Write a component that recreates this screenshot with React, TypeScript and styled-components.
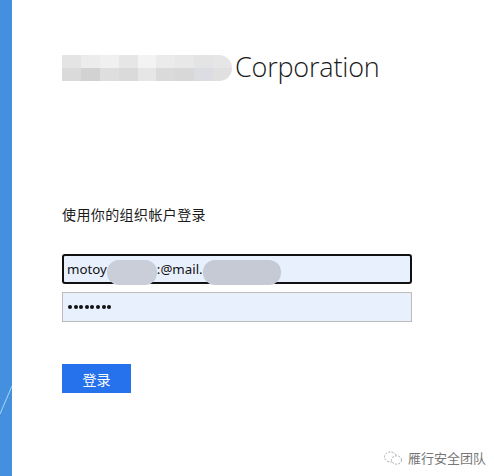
import React from "react";
import styled, { createGlobalStyle } from "styled-components";

const Global = createGlobalStyle`
  html, body { margin: 0; padding: 0; background: #fff; }
  body { font-family: "Segoe UI", "Open Sans", "Noto Sans CJK SC", sans-serif; }
`;

const Page = styled.div`
  display: flex;
  width: 494px;
  height: 476px;
  overflow: hidden;
  position: relative;
`;

const Stripe = styled.div`
  width: 12px;
  flex: none;
  background: #4590de;
  position: relative;
`;

const StripeLine = styled.svg`
  position: absolute;
  left: 0;
  top: 380px;
`;

const Main = styled.main`
  flex: 1;
  padding: 50px 0 0 50px;
  display: flex;
  flex-direction: column;
`;

const Brand = styled.div`
  display: flex;
  align-items: center;
  gap: 3px;
  height: 32px;
`;

const Blur = styled.div`
  display: flex;
  width: 170px;
  height: 26px;
  flex-direction: column;
  border-radius: 0 14px 14px 0;
  overflow: hidden;
  margin-top: 3px;
`;

const BlurRow = styled.div`
  display: flex;
  flex: 1;
`;

const BlurCell = styled.div<{ $c: string }>`
  flex: 1;
  background: ${(p) => p.$c};
`;

const Corp = styled.span`
  font-family: "Open Sans", sans-serif;
  font-weight: 300;
  font-size: 27px;
  color: #1a1a1a;
  letter-spacing: -0.2px;
`;

const Prompt = styled.div`
  margin-top: 122px;
  font-family: "Noto Sans CJK SC", sans-serif;
  font-size: 14px;
  color: #1a1a1a;
  letter-spacing: 0.4px;
  line-height: 20px;
`;

const Field = styled.div<{ $focused?: boolean }>`
  box-sizing: border-box;
  width: 350px;
  height: 30px;
  background: #e8f0fe;
  border: ${(p) => (p.$focused ? "2px solid #111" : "1px solid #bcbcbc")};
  border-radius: ${(p) => (p.$focused ? "3px" : "0")};
  display: flex;
  align-items: center;
  padding-left: ${(p) => (p.$focused ? "3px" : "4px")};
  font-family: "Noto Sans", "Open Sans", sans-serif;
  font-size: 13.3px;
  color: #111;
`;

const Fields = styled.div`
  margin-top: 30px;
  display: flex;
  flex-direction: column;
  gap: 8px;
`;

const Masked = styled.span<{ $w: number; $c: string }>`
  display: inline-block;
  width: ${(p) => p.$w}px;
  height: 25px;
  border-radius: 12px;
  background: ${(p) => p.$c};
  margin-top: 6px;
`;

const Dots = styled.span`
  display: flex;
  gap: 1.6px;
  padding-left: 1px;
`;

const Dot = styled.span`
  width: 4px;
  height: 4px;
  border-radius: 50%;
  background: #111;
`;

const Button = styled.button`
  margin-top: 42px;
  width: 69px;
  height: 29px;
  border: none;
  background: #2672ec;
  color: #fff;
  font-family: "Noto Sans CJK SC", sans-serif;
  font-size: 14px;
  padding: 0;
  cursor: pointer;
`;

const Watermark = styled.div`
  position: absolute;
  right: 8px;
  bottom: 9px;
  display: flex;
  align-items: center;
  gap: 5px;
  font-family: "Noto Sans CJK SC", sans-serif;
  font-size: 13px;
  color: #777;
`;

const cells1 = ["#e4e4e4", "#ececec", "#f0f0f0", "#e6e6e6", "#f3f3f3", "#ebebeb", "#e8e8e8", "#e4e4e4", "#e6e6e6"];
const cells2 = ["#dadada", "#d2d2d2", "#dedede", "#dadada", "#e6e6e6", "#dadada", "#d8d8d8", "#dcdde2", "#e0e0e0"];

export default function App() {
  return (
    <>
      <Global />
      <Page>
        <Stripe>
          <StripeLine width="12" height="40" viewBox="0 0 12 40">
            <line x1="0" y1="34" x2="12" y2="6" stroke="#a9d8f5" strokeWidth="1" />
          </StripeLine>
        </Stripe>
        <Main>
          <Brand>
            <Blur>
              <BlurRow>
                {cells1.map((c, i) => (
                  <BlurCell key={i} $c={c} />
                ))}
              </BlurRow>
              <BlurRow>
                {cells2.map((c, i) => (
                  <BlurCell key={i} $c={c} />
                ))}
              </BlurRow>
            </Blur>
            <Corp>Corporation</Corp>
          </Brand>
          <Prompt>使用你的组织帐户登录</Prompt>
          <Fields>
            <Field $focused>
              motoy
              <Masked $w={50} $c="#c9ced8" />
              :@mail.
              <Masked $w={78} $c="#c5cad4" />
            </Field>
            <Field>
              <Dots aria-label="password">
                {Array.from({ length: 8 }).map((_, i) => (
                  <Dot key={i} />
                ))}
              </Dots>
            </Field>
          </Fields>
          <Button>登录</Button>
        </Main>
        <Watermark>
          <svg width="20" height="16" viewBox="0 0 20 16">
            <ellipse cx="7.5" cy="7" rx="6" ry="5" fill="none" stroke="#aaa" strokeWidth="1" strokeDasharray="2 1.3" />
            <ellipse cx="13.5" cy="10" rx="5" ry="4.2" fill="#fff" stroke="#aaa" strokeWidth="1" strokeDasharray="2 1.3" />
          </svg>
          雁行安全团队
        </Watermark>
      </Page>
    </>
  );
}
